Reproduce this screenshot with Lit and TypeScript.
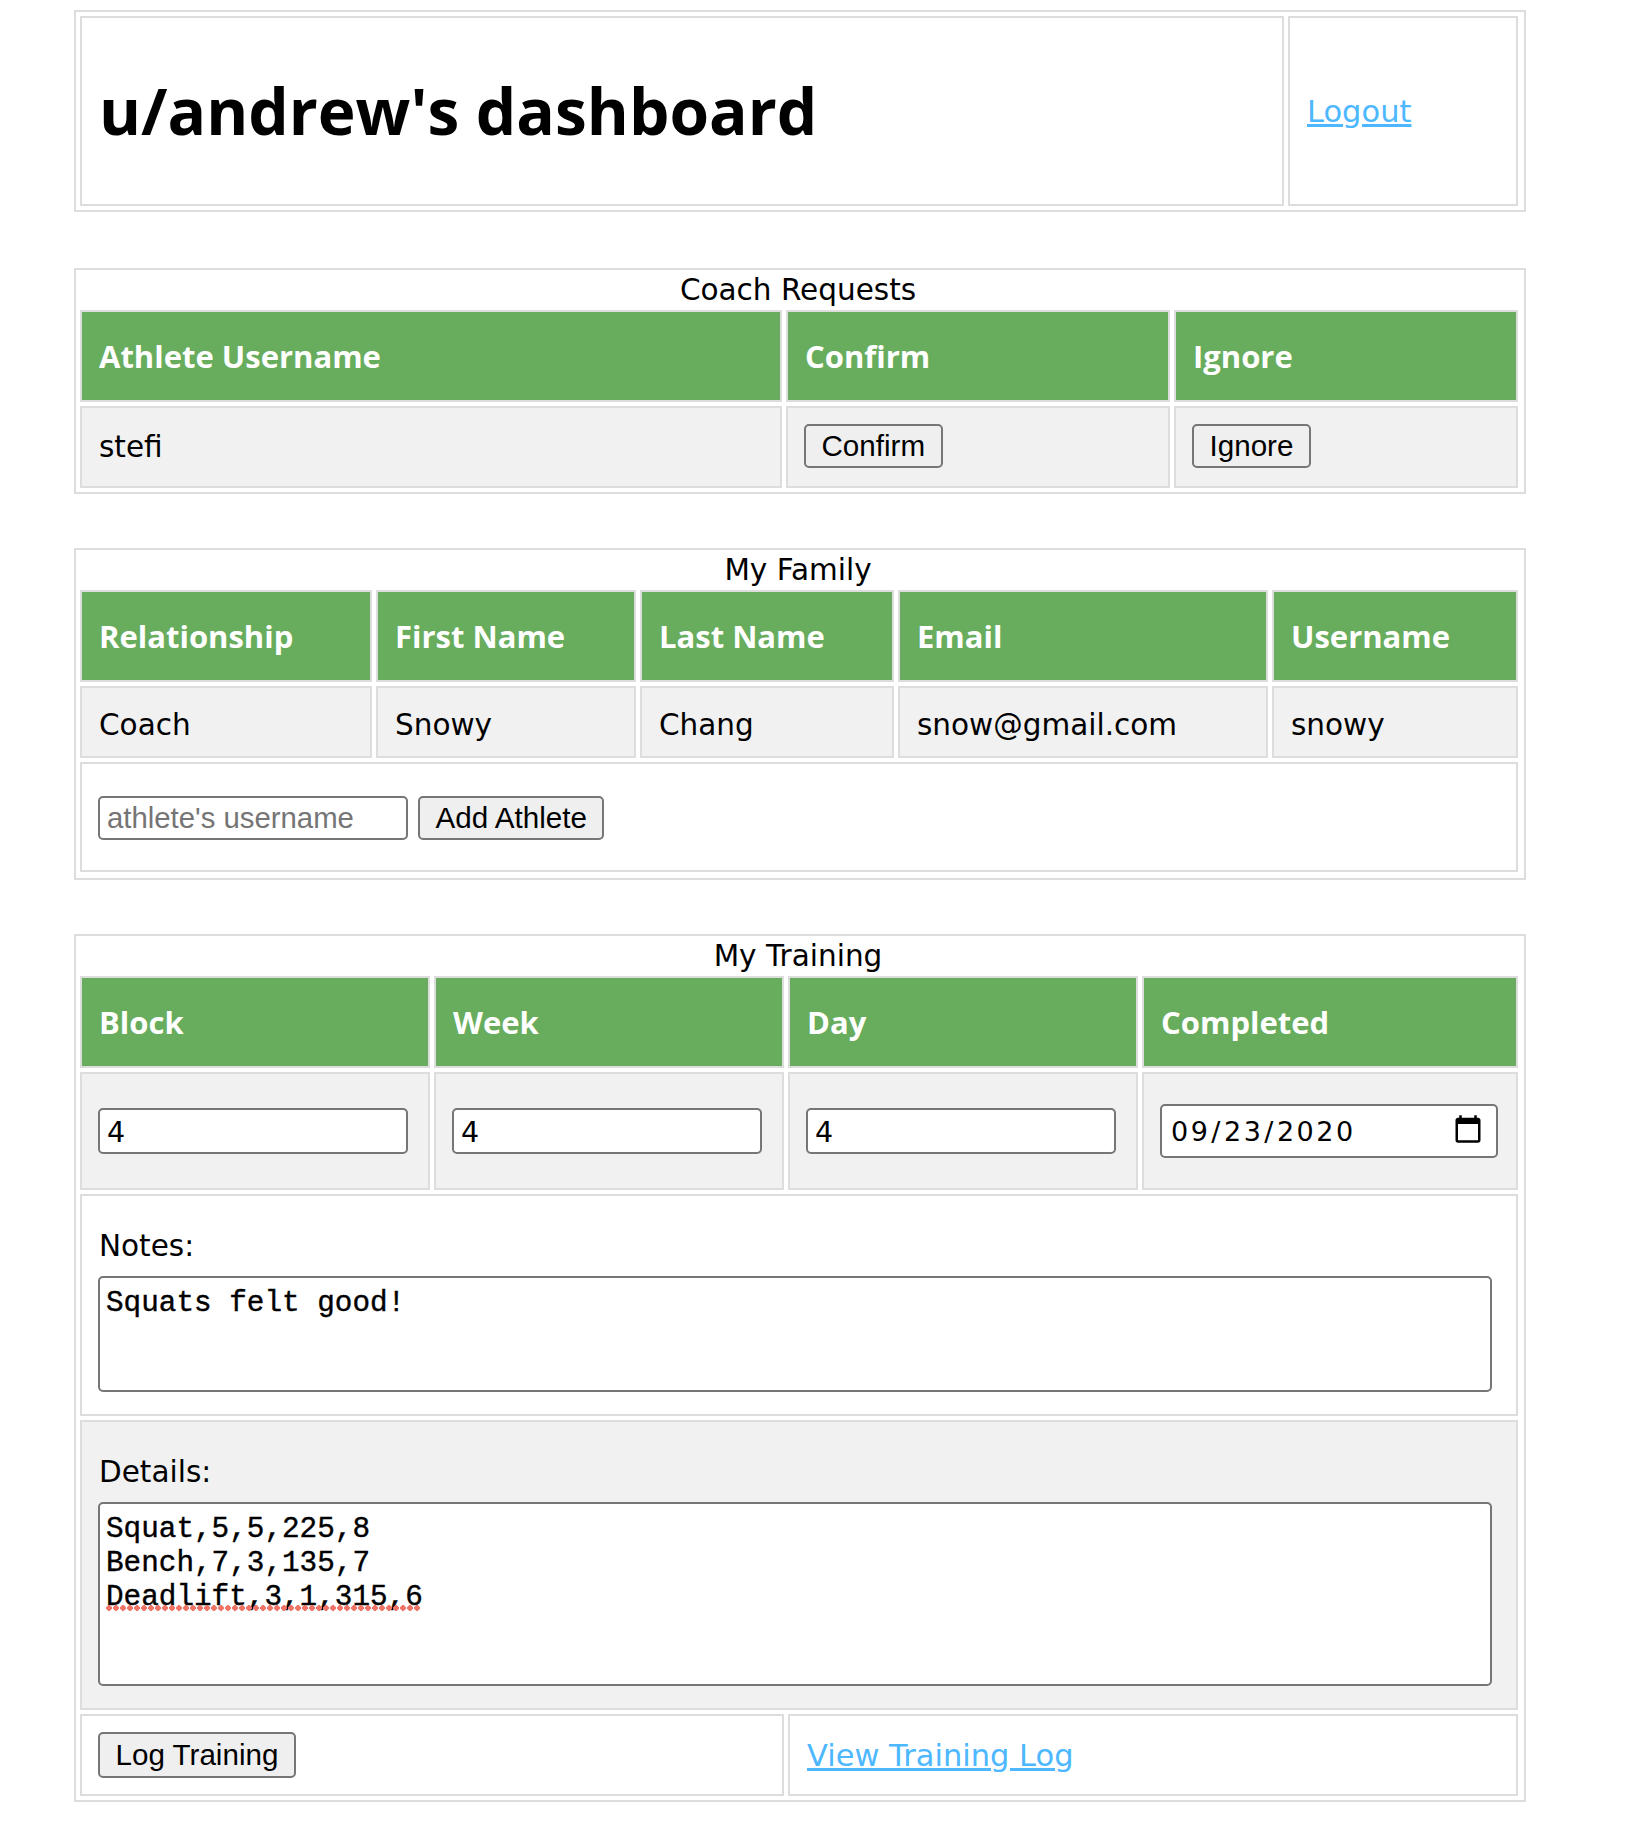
import { LitElement, html, css } from 'lit';
import { customElement } from 'lit/decorators.js';

@customElement('app-root')
export class AppRoot extends LitElement {
  static styles = css`
    :host {
      display: block;
      padding: 10px 0 0 74px;
      font-family: 'DejaVu Sans', sans-serif;
      font-size: 29.5px;
      color: #000;
      background: #fff;
    }
    * { box-sizing: border-box; }
    .box {
      width: 1452px;
      border: 2px solid #ddd;
      padding-bottom: 4px;
    }
    .box.gap-56 { margin-top: 56px; }
    .box.gap-54 { margin-top: 54px; }
    .box.head { padding-top: 4px; }
    .box.family { padding-bottom: 6px; }
    .caption {
      height: 40px;
      line-height: 40px;
      padding-right: 4px;
      text-align: center;
    }
    .grid {
      display: grid;
      gap: 4px;
      padding: 0 6px 0 4px;
    }
    .cols-head { grid-template-columns: 1204px 230px; }
    .cols-coach { grid-template-columns: 702px 384px 344px; }
    .cols-family { grid-template-columns: 292px 260px 254px 370px 246px; }
    .cols-training { grid-template-columns: 350px 350px 350px 376px; }
    .cell {
      display: flex;
      align-items: center;
      border: 2px solid #ddd;
      padding: 0 16px 0 17px;
    }
    .ctl { padding-left: 16px; }
    .th {
      height: 92px;
      background: #68ad5d;
      color: #fff;
      font: 700 31px 'Open Sans', sans-serif;
    }
    .alt { background: #f1f1f1; }
    .wide { grid-column: 1 / -1; }
    .half { grid-column: span 2; }
    .h-title { height: 190px; }
    .h-coach { height: 82px; }
    .h-coach.ctl { padding-bottom: 2px; }
    .h-family { height: 72px; padding-top: 6px; }
    .h-add { height: 110px; gap: 10px; padding-top: 2px; }
    .h-inputs { height: 118px; }
    .h-last { height: 82px; }
    h1 {
      margin: 0;
      font: 700 64px/1 'Open Sans', sans-serif;
    }
    a { color: #4db8ff; text-decoration: underline; font-size: 30.5px; }
    button {
      height: 44px;
      padding: 0 15.5px;
      font: 29.6px 'Liberation Sans', Arial, sans-serif;
      color: #000;
      background: #efefef;
      border: 2px solid #767676;
      border-radius: 5px;
    }
    .log-btn { height: 46px; }
    input {
      border: 2px solid #767676;
      border-radius: 5px;
      background: #fff;
      color: #000;
      padding: 0 7px;
      outline: none;
    }
    .username {
      width: 310px;
      height: 44px;
      font: 29.33px 'Liberation Sans', Arial, sans-serif;
    }
    .username::placeholder { color: #757575; }
    .num {
      width: 310px;
      height: 46px;
      padding-top: 2px;
      font: 28.5px 'DejaVu Sans', sans-serif;
    }
    .date {
      width: 338px;
      height: 54px;
      padding: 0 12px 0 8px;
      font: 27px 'DejaVu Sans', sans-serif;
      letter-spacing: 2.5px;
    }
    .date::-webkit-calendar-picker-indicator {
      width: 32px;
      height: 34px;
      padding: 0;
      margin: 0;
    }
    .stack {
      display: block;
      padding: 30px 20px 0 17px;
    }
    .label {
      height: 40px;
      line-height: 40px;
    }
    .h-notes { height: 222px; }
    .h-details { height: 290px; }
    .area {
      position: relative;
      width: 1394px;
      margin: 10px 0 0 -1px;
    }
    textarea {
      display: block;
      width: 100%;
      padding: 9px 6px 0;
      font: 29.33px/34px 'Liberation Mono', 'Courier New', monospace;
      -webkit-text-stroke: 0.4px #000;
      color: #000;
      background: #fff;
      border: 2px solid #767676;
      border-radius: 5px;
      resize: none;
      outline: none;
    }
    .notes { height: 116px; }
    .details { height: 184px; }
    /* spellcheck squiggle under the Deadlift line */
    .squiggle {
      position: absolute;
      left: 8px;
      top: 103px;
      width: 315px;
      height: 6px;
      background: radial-gradient(circle at 3px 3px, #ee7468 2.6px, transparent 3px) 0 0 / 7px 6px repeat-x;
    }
  `;

  render() {
    return html`
      <div class="box head">
        <div class="grid cols-head">
          <div class="cell h-title"><h1>u/andrew's dashboard</h1></div>
          <div class="cell h-title"><a href="#">Logout</a></div>
        </div>
      </div>

      <div class="box gap-56">
        <div class="caption">Coach Requests</div>
        <div class="grid cols-coach">
          <div class="cell th">Athlete Username</div>
          <div class="cell th">Confirm</div>
          <div class="cell th">Ignore</div>
          <div class="cell alt h-coach">stefi</div>
          <div class="cell ctl alt h-coach"><button>Confirm</button></div>
          <div class="cell ctl alt h-coach"><button>Ignore</button></div>
        </div>
      </div>

      <div class="box family gap-54">
        <div class="caption">My Family</div>
        <div class="grid cols-family">
          <div class="cell th">Relationship</div>
          <div class="cell th">First Name</div>
          <div class="cell th">Last Name</div>
          <div class="cell th">Email</div>
          <div class="cell th">Username</div>
          <div class="cell alt h-family">Coach</div>
          <div class="cell alt h-family">Snowy</div>
          <div class="cell alt h-family">Chang</div>
          <div class="cell alt h-family">snow@gmail.com</div>
          <div class="cell alt h-family">snowy</div>
          <div class="cell ctl wide h-add">
            <input class="username" placeholder="athlete's username" />
            <button>Add Athlete</button>
          </div>
        </div>
      </div>

      <div class="box gap-54">
        <div class="caption">My Training</div>
        <div class="grid cols-training">
          <div class="cell th">Block</div>
          <div class="cell th">Week</div>
          <div class="cell th">Day</div>
          <div class="cell th">Completed</div>
          <div class="cell ctl alt h-inputs"><input class="num" value="4" /></div>
          <div class="cell ctl alt h-inputs"><input class="num" value="4" /></div>
          <div class="cell ctl alt h-inputs"><input class="num" value="4" /></div>
          <div class="cell ctl alt h-inputs"><input class="date" type="date" value="2020-09-23" /></div>
          <div class="cell stack wide h-notes">
            <div class="label">Notes:</div>
            <div class="area"><textarea class="notes" spellcheck="false" .value=${'Squats felt good!'}></textarea></div>
          </div>
          <div class="cell stack alt wide h-details">
            <div class="label">Details:</div>
            <div class="area">
              <textarea class="details" spellcheck="false" .value=${'Squat,5,5,225,8\nBench,7,3,135,7\nDeadlift,3,1,315,6'}></textarea>
              <div class="squiggle"></div>
            </div>
          </div>
          <div class="cell ctl half h-last"><button class="log-btn">Log Training</button></div>
          <div class="cell half h-last"><a href="#">View Training Log</a></div>
        </div>
      </div>
    `;
  }
}
